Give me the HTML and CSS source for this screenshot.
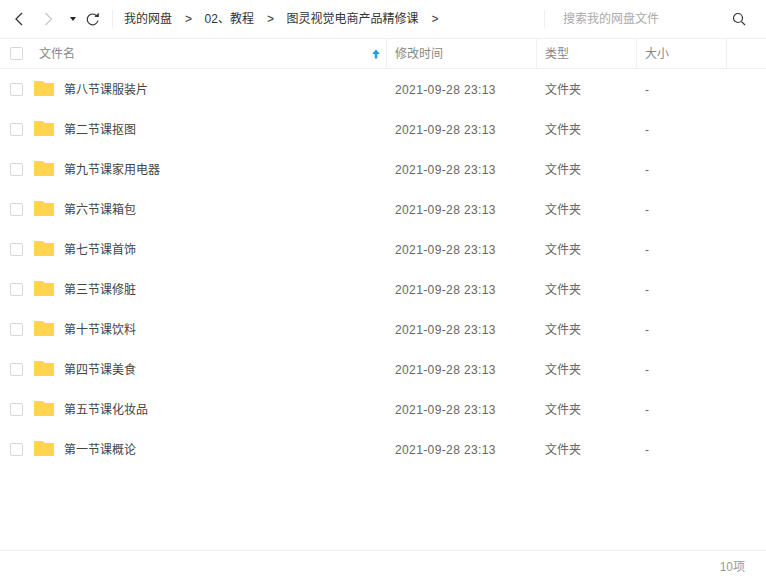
FILE: index.html
```html
<!DOCTYPE html>
<html lang="zh">
<head>
<meta charset="utf-8">
<title>图灵视觉电商产品精修课</title>
<link rel="stylesheet" href="styles.css">
</head>
<body>
<div class="app">
  <header class="toolbar">
    <div class="nav">
      <svg class="ic back" width="9" height="14" viewBox="0 0 9 14"><path d="M8 1 2 7l6 6" fill="none" stroke="#333" stroke-width="1.300"/></svg>
      <svg class="ic fwd" width="9" height="14" viewBox="0 0 9 14"><path d="M1.500 1l6 6-6 6" fill="none" stroke="#c8c8c8" stroke-width="1.300"/></svg>
      <svg class="ic drop" width="6" height="4" viewBox="0 0 6 4"><path d="M0 0h6L3 4z" fill="#222"/></svg>
      <svg class="ic refresh" width="15" height="15" viewBox="0 0 15 15"><path d="M11.800 4A5.400 5.400 0 1 0 12.900 8.500" fill="none" stroke="#333" stroke-width="1.200"/><path d="M9.300 5h4.500V.800z" fill="#333"/></svg>
      <span class="sep"></span>
    </div>
    <nav class="crumbs">
      <span>我的网盘</span><span class="gt">&gt;</span>
      <span>02、教程</span><span class="gt">&gt;</span>
      <span>图灵视觉电商产品精修课</span><span class="gt">&gt;</span>
    </nav>
    <div class="search">
      <span class="search-text">搜索我的网盘文件</span>
      <svg width="14" height="14" viewBox="0 0 14 14"><circle cx="6" cy="6" r="4.500" fill="none" stroke="#333" stroke-width="1.200"/><path d="M9.300 9.300l3.700 3.700" stroke="#333" stroke-width="1.200"/></svg>
    </div>
  </header>
  <div class="thead">
    <div class="c-check"><span class="box"></span></div>
    <div class="c-name th">文件名<svg class="sort" width="8" height="10" viewBox="0 0 8 10"><path d="M4 .5 7.800 5H5.200v4.500H2.800V5H.2z" fill="#1e9be8"/></svg></div>
    <div class="c-time th">修改时间</div>
    <div class="c-type th">类型</div>
    <div class="c-size th">大小</div>
    <div class="c-rest th"></div>
  </div>
  <main class="rows">
    <div class="row"><div class="c-check"><span class="box"></span></div><div class="c-name"><svg class="folder" width="20" height="15" viewBox="0 0 20 15"><path d="M1 0h8l2 2h8q1 0 1 1v11q0 1-1 1H1q-1 0-1-1V1q0-1 1-1z" fill="#ffd44f"/></svg><span class="fname">第八节课服装片</span></div><div class="c-time"><span class="val date">2021-09-28 23:13</span></div><div class="c-type"><span class="val">文件夹</span></div><div class="c-size"><span class="val">-</span></div></div>
    <div class="row"><div class="c-check"><span class="box"></span></div><div class="c-name"><svg class="folder" width="20" height="15" viewBox="0 0 20 15"><path d="M1 0h8l2 2h8q1 0 1 1v11q0 1-1 1H1q-1 0-1-1V1q0-1 1-1z" fill="#ffd44f"/></svg><span class="fname">第二节课抠图</span></div><div class="c-time"><span class="val date">2021-09-28 23:13</span></div><div class="c-type"><span class="val">文件夹</span></div><div class="c-size"><span class="val">-</span></div></div>
    <div class="row"><div class="c-check"><span class="box"></span></div><div class="c-name"><svg class="folder" width="20" height="15" viewBox="0 0 20 15"><path d="M1 0h8l2 2h8q1 0 1 1v11q0 1-1 1H1q-1 0-1-1V1q0-1 1-1z" fill="#ffd44f"/></svg><span class="fname">第九节课家用电器</span></div><div class="c-time"><span class="val date">2021-09-28 23:13</span></div><div class="c-type"><span class="val">文件夹</span></div><div class="c-size"><span class="val">-</span></div></div>
    <div class="row"><div class="c-check"><span class="box"></span></div><div class="c-name"><svg class="folder" width="20" height="15" viewBox="0 0 20 15"><path d="M1 0h8l2 2h8q1 0 1 1v11q0 1-1 1H1q-1 0-1-1V1q0-1 1-1z" fill="#ffd44f"/></svg><span class="fname">第六节课箱包</span></div><div class="c-time"><span class="val date">2021-09-28 23:13</span></div><div class="c-type"><span class="val">文件夹</span></div><div class="c-size"><span class="val">-</span></div></div>
    <div class="row"><div class="c-check"><span class="box"></span></div><div class="c-name"><svg class="folder" width="20" height="15" viewBox="0 0 20 15"><path d="M1 0h8l2 2h8q1 0 1 1v11q0 1-1 1H1q-1 0-1-1V1q0-1 1-1z" fill="#ffd44f"/></svg><span class="fname">第七节课首饰</span></div><div class="c-time"><span class="val date">2021-09-28 23:13</span></div><div class="c-type"><span class="val">文件夹</span></div><div class="c-size"><span class="val">-</span></div></div>
    <div class="row"><div class="c-check"><span class="box"></span></div><div class="c-name"><svg class="folder" width="20" height="15" viewBox="0 0 20 15"><path d="M1 0h8l2 2h8q1 0 1 1v11q0 1-1 1H1q-1 0-1-1V1q0-1 1-1z" fill="#ffd44f"/></svg><span class="fname">第三节课修脏</span></div><div class="c-time"><span class="val date">2021-09-28 23:13</span></div><div class="c-type"><span class="val">文件夹</span></div><div class="c-size"><span class="val">-</span></div></div>
    <div class="row"><div class="c-check"><span class="box"></span></div><div class="c-name"><svg class="folder" width="20" height="15" viewBox="0 0 20 15"><path d="M1 0h8l2 2h8q1 0 1 1v11q0 1-1 1H1q-1 0-1-1V1q0-1 1-1z" fill="#ffd44f"/></svg><span class="fname">第十节课饮料</span></div><div class="c-time"><span class="val date">2021-09-28 23:13</span></div><div class="c-type"><span class="val">文件夹</span></div><div class="c-size"><span class="val">-</span></div></div>
    <div class="row"><div class="c-check"><span class="box"></span></div><div class="c-name"><svg class="folder" width="20" height="15" viewBox="0 0 20 15"><path d="M1 0h8l2 2h8q1 0 1 1v11q0 1-1 1H1q-1 0-1-1V1q0-1 1-1z" fill="#ffd44f"/></svg><span class="fname">第四节课美食</span></div><div class="c-time"><span class="val date">2021-09-28 23:13</span></div><div class="c-type"><span class="val">文件夹</span></div><div class="c-size"><span class="val">-</span></div></div>
    <div class="row"><div class="c-check"><span class="box"></span></div><div class="c-name"><svg class="folder" width="20" height="15" viewBox="0 0 20 15"><path d="M1 0h8l2 2h8q1 0 1 1v11q0 1-1 1H1q-1 0-1-1V1q0-1 1-1z" fill="#ffd44f"/></svg><span class="fname">第五节课化妆品</span></div><div class="c-time"><span class="val date">2021-09-28 23:13</span></div><div class="c-type"><span class="val">文件夹</span></div><div class="c-size"><span class="val">-</span></div></div>
    <div class="row"><div class="c-check"><span class="box"></span></div><div class="c-name"><svg class="folder" width="20" height="15" viewBox="0 0 20 15"><path d="M1 0h8l2 2h8q1 0 1 1v11q0 1-1 1H1q-1 0-1-1V1q0-1 1-1z" fill="#ffd44f"/></svg><span class="fname">第一节课概论</span></div><div class="c-time"><span class="val date">2021-09-28 23:13</span></div><div class="c-type"><span class="val">文件夹</span></div><div class="c-size"><span class="val">-</span></div></div>
  </main>
  <footer class="footer">10项</footer>
</div>
</body>
</html>
```
FILE: styles.css
```css
* { box-sizing: border-box; }
html, body { margin: 0; height: 100%; background: #fff; }
body { overflow: hidden; font: 12px/16px "Liberation Sans", "Noto Sans CJK SC", sans-serif; color: #666; }
.app { height: 583px; display: flex; flex-direction: column; }
.toolbar { height: 39px; flex: none; display: flex; align-items: center; border-bottom: 1px solid #eee; }
.nav { width: 124px; flex: none; display: flex; align-items: center; height: 100%; padding-left: 14px; }
.ic { flex: none; display: block; }
.fwd { margin-left: 21px; }
.drop { margin-left: 17px; }
.refresh { margin-left: 9px; }
.sep { width: 1px; height: 18px; background: #eee; margin-left: 12px; }
.crumbs { flex: 1; display: flex; align-items: center; color: #333; white-space: nowrap; }
.gt { margin: 0 12.500px 0 13px; }
.search { width: 222px; flex: none; height: 100%; display: flex; align-items: center; justify-content: space-between; padding: 0 20px 0 19px; position: relative; color: #aaa; }
.search::before { content: ""; position: absolute; left: 0; top: 10px; width: 1px; height: 18px; background: #eee; }
.search svg { flex: none; }
.thead { height: 30px; flex: none; display: flex; align-items: stretch; }
.thead > div { border-bottom: 1px solid #f0f0f0; }
.c-check { width: 33px; flex: none; display: flex; align-items: center; padding-left: 10px; }
.box { width: 13px; height: 13px; border: 1px solid #d8d8d8; border-radius: 2px; background: #fff; display: block; }
.c-name { width: 354px; flex: none; display: flex; align-items: center; }
.c-time, .c-type, .c-size { flex: none; display: flex; align-items: center; padding-left: 8px; }
.c-time { width: 150px; }
.c-type { width: 100px; }
.c-size { width: 90px; }
.c-rest { flex: 1; }
.th { color: #888; position: relative; }
.c-name.th { padding-left: 6px; justify-content: space-between; padding-right: 6px; border-right: 1px solid #f0f0f0; }
.c-time.th, .c-type.th, .c-size.th { border-right: 1px solid #f0f0f0; }
.sort { display: block; }
.rows { flex: 1; }
.row { height: 40px; display: flex; align-items: center; }
.folder { flex: none; display: block; margin: 0 0 2px 1px; }
.fname { margin: 2px 0 0 10px; color: #444; }
.val { margin-top: 2px; }
.date { letter-spacing: .38px; }
.footer { height: 33px; flex: none; border-top: 1px solid #eee; display: flex; align-items: center; justify-content: flex-end; padding-right: 21px; color: #999; }
```
